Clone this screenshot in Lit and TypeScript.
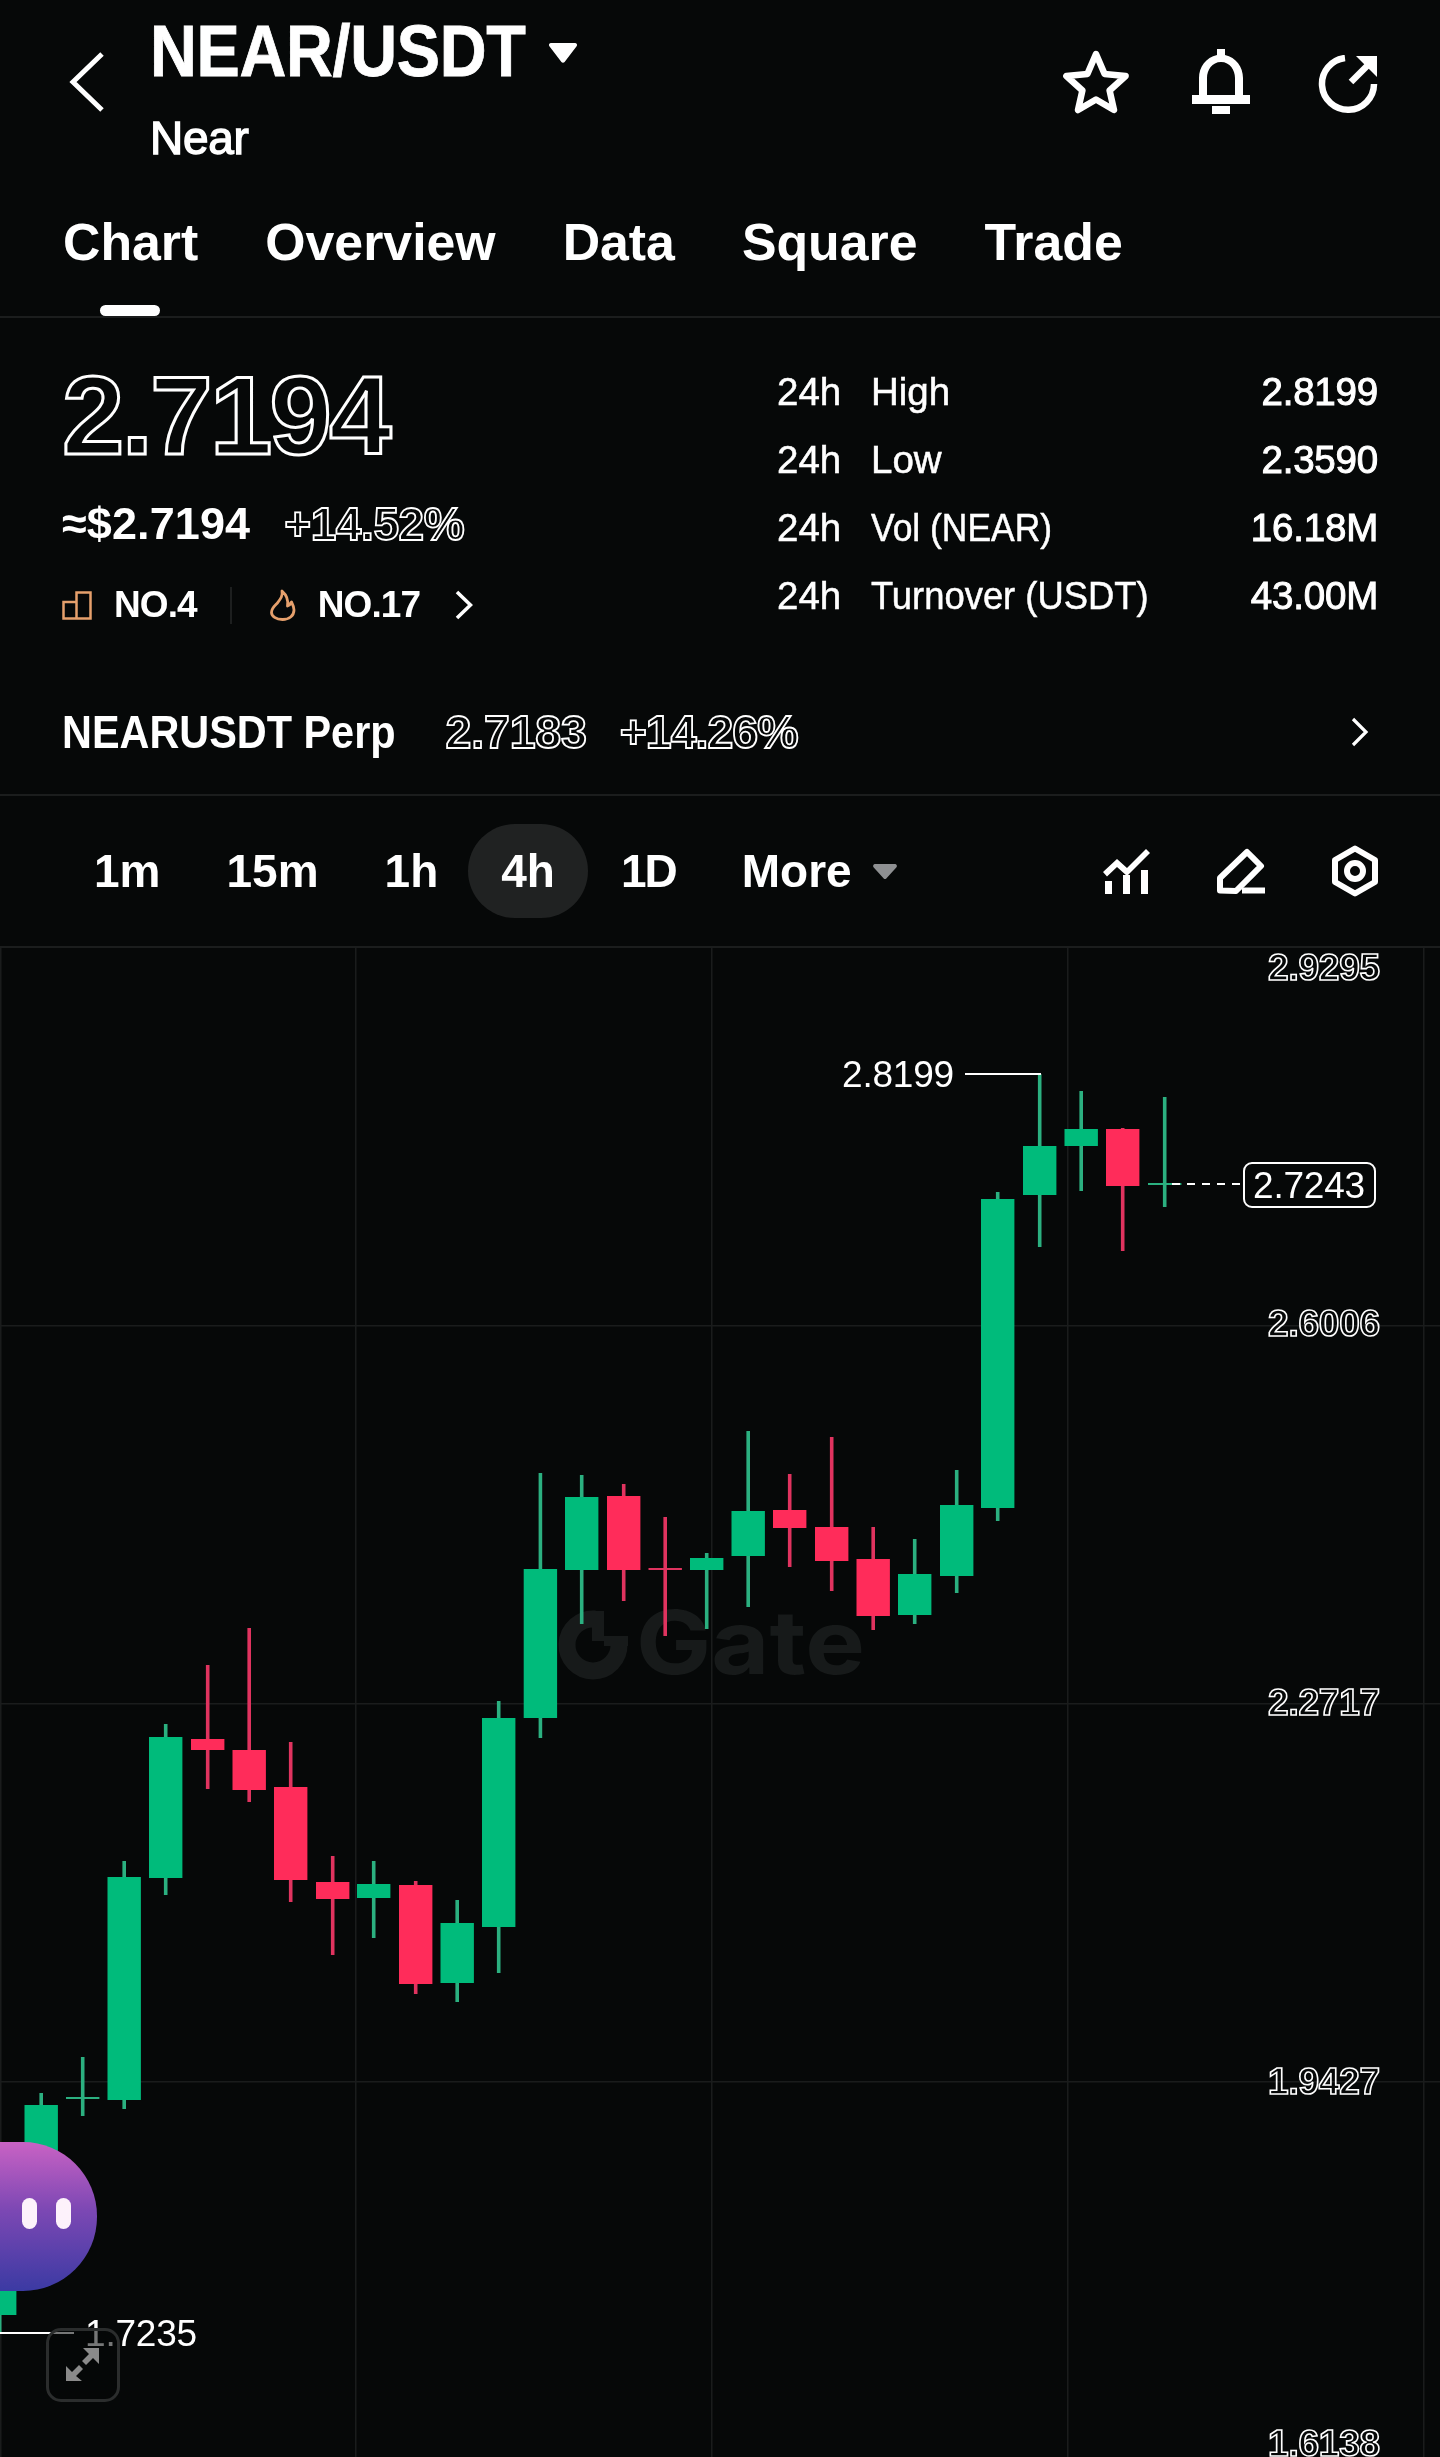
import { LitElement, html, css, svg } from "lit";
import { customElement } from "lit/decorators.js";

type C = [number, number, number, number, number, "g" | "r"]; // x, wickTop, wickBottom, bodyTop, bodyBottom, colour

const candles: C[] = [
  [-17, 2200, 2333, 2200, 2315, "g"],
  [24.5, 2093, 2200, 2105, 2200, "g"],
  [66, 2057, 2116, 2097, 2099, "g"],
  [107.5, 1861, 2109, 1877, 2100, "g"],
  [149, 1724, 1895, 1737, 1878, "g"],
  [191, 1665, 1789, 1739, 1750, "r"],
  [232.5, 1628, 1802, 1750, 1790, "r"],
  [274, 1742, 1902, 1787, 1880, "r"],
  [316, 1856, 1955, 1882, 1899, "r"],
  [357, 1861, 1938, 1884, 1898, "g"],
  [399, 1881, 1994, 1885, 1984, "r"],
  [440.5, 1900, 2002, 1923, 1983, "g"],
  [482, 1701, 1973, 1718, 1927, "g"],
  [523.7, 1473, 1738, 1569, 1718, "g"],
  [565, 1475, 1624, 1497, 1570, "g"],
  [607, 1484, 1601, 1496, 1570, "r"],
  [648.5, 1517, 1636, 1568, 1570, "r"],
  [690, 1553, 1629, 1558, 1570, "g"],
  [731.5, 1431, 1607, 1511, 1556, "g"],
  [773, 1474, 1567, 1510, 1528, "r"],
  [815, 1437, 1591, 1527, 1561, "r"],
  [856.5, 1527, 1630, 1559, 1616, "r"],
  [898, 1539, 1624, 1574, 1615, "g"],
  [940, 1470, 1593, 1505, 1576, "g"],
  [981, 1192, 1521, 1199, 1508, "g"],
  [1023, 1074, 1247, 1146, 1195, "g"],
  [1064.5, 1091, 1191, 1129, 1146, "g"],
  [1106, 1128, 1251, 1129, 1186, "r"],
  [1148, 1097, 1207, 1183, 1185, "g"],
];

const CHART_TOP = 948;

@customElement("app-root")
export class AppRoot extends LitElement {
  static styles = css`
    :host {
      display: block;
      width: 1440px;
      height: 2457px;
      overflow: hidden;
      background: #060808;
      color: #fff;
      font-family: "Liberation Sans", Arial, sans-serif;
    }
    .page { will-change: transform; }
    svg { display: block; }
    .header {
      height: 123px;
      display: flex;
      align-items: flex-start;
      padding: 0 62px 0 68px;
    }
    .back { margin-top: 51px; width: 36px; height: 62px; flex: none; }
    .titles { margin-left: 46px; flex: 1; }
    .title-row { display: flex; align-items: flex-start; height: 92px; }
    .title {
      font-size: 72px;
      line-height: 52px;
      margin-top: 25px;
      margin-right: -36px;
      font-weight: 700;
      letter-spacing: -0.3px;
      -webkit-text-stroke: 0.8px #fff;
      transform: scaleX(0.9);
      transform-origin: left center;
    }
    .caret { margin: 43px 0 0 18px; }
    .sub {
      font-size: 46px;
      line-height: 46px;
      margin-top: 23px;
      letter-spacing: -0.3px;
      -webkit-text-stroke: 1.4px #fff;
    }
    .head-icons { display: flex; margin-top: 48px; align-items: flex-start; margin-left: -2px; }
    .head-icons .bell { margin-left: 63px; }
    .head-icons .share { margin-left: 68px; margin-top: 7px; }
    .tabs {
      height: 195px;
      padding-left: 63px;
      box-sizing: border-box;
      border-bottom: 2px solid #1b1d1d;
    }
    .tabs-inner { display: flex; gap: 67px; height: 193px; }
    .tab {
      font-size: 51.8px;
      font-weight: 700;
      line-height: 50px;
      margin-top: 94px;
      position: relative;
      height: 99px;
      white-space: nowrap;
    }
    .tab.active::after {
      content: "";
      position: absolute;
      left: 37px;
      bottom: 0;
      width: 60px;
      height: 11px;
      border-radius: 6px;
      background: #fff;
    }
    .stats {
      height: 478px;
      border-bottom: 2px solid #1b1d1d;
      box-sizing: border-box;
      padding: 0 62px;
      display: flex;
      flex-direction: column;
    }
    .stats-main { display: flex; justify-content: space-between; height: 359px; }
    .left { width: 700px; }
    .outline { color: transparent; white-space: nowrap; font-weight: 700; }
    .price {
      font-size: 112px;
      line-height: 84px;
      letter-spacing: -2.6px;
      margin-top: 56px;
      -webkit-text-stroke: 3px #fff;
    }
    .line2 { display: flex; align-items: center; margin-top: 44px; height: 44px; }
    .usd { font-size: 45px; font-weight: 700; letter-spacing: 0.1px; line-height: 44px; white-space: nowrap; }
    .chg {
      font-size: 46px;
      line-height: 44px;
      margin-left: 34px;
      letter-spacing: -0.4px;
      -webkit-text-stroke: 1.8px #fff;
    }
    .line3 { display: flex; align-items: center; margin-top: 39px; height: 40px; }
    .no { font-size: 37px; line-height: 40px; font-weight: 700; letter-spacing: -0.9px; margin-left: 22px; white-space: nowrap; }
    .sep { width: 2px; height: 37px; background: #1d1f1f; margin: 0 37px 0 33px; }
    .line3 .chev { margin-left: 35px; }
    .right { width: 601px; display: flex; flex-direction: column; padding-top: 57px; }
    .row {
      display: grid;
      grid-template-columns: 94px 1fr auto;
      height: 68px;
      font-size: 38.5px;
      line-height: 34px;
      -webkit-text-stroke: 0.5px #fff;
      white-space: nowrap;
    }
    .row .vol { transform: scaleX(0.92); transform-origin: left center; }
    .row .turn { transform: scaleX(0.945); transform-origin: left center; }
    .row .v { -webkit-text-stroke: 1px #fff; letter-spacing: -0.2px; }
    .perp { display: flex; align-items: center; height: 110px; }
    .perp-name {
      font-size: 46px;
      font-weight: 700;
      white-space: nowrap;
      margin-right: -36px;
      transform: scaleX(0.9);
      transform-origin: left center;
    }
    .perp-price { font-size: 46.5px; letter-spacing: -0.2px; -webkit-text-stroke: 1.8px #fff; margin-left: 49px; }
    .perp-chg { font-size: 46.5px; letter-spacing: -1px; -webkit-text-stroke: 1.8px #fff; margin-left: 33px; }
    .perp .chev { margin-left: auto; margin-right: 9px; }
    .toolbar {
      height: 152px;
      border-bottom: 2px solid #1b1d1d;
      box-sizing: border-box;
      display: flex;
      align-items: center;
      padding: 0 62px 0 61px;
    }
    .periods { display: flex; align-items: center; flex: 1; }
    .period {
      font-size: 46px;
      font-weight: 700;
      line-height: 94px;
      height: 94px;
      padding: 0 33px;
      border-radius: 47px;
      white-space: nowrap;
    }
    .period.on { background: #202222; margin-left: -3px; }
    .period.day { letter-spacing: -2px; }
    .more-caret { margin-left: -12px; }
    .tools { display: flex; align-items: center; gap: 67px; }
    .chart { position: relative; height: 1509px; }
    .chart > svg { position: absolute; left: 0; top: 0; overflow: visible; }
    .axis {
      font-size: 37px;
      font-weight: 700;
      fill: transparent;
      stroke: #fff;
      stroke-width: 1.6px;
      text-anchor: end;
      letter-spacing: -0.2px;
    }
    .note { font-size: 37px; fill: #fff; letter-spacing: -0.2px; }
    .mark {
      font-size: 88px;
      font-weight: 700;
      fill: #171a1a;
      font-family: "Inter", "Liberation Sans", sans-serif;
    }
    .bot {
      position: absolute;
      left: 0;
      top: 1194px;
      width: 97px;
      height: 149px;
      border-radius: 0 74px 74px 0;
      background: linear-gradient(180deg, #c962c4 0%, #7d48b4 45%, #3b3aa3 100%);
      display: flex;
      gap: 19px;
      padding: 56px 0 0 22px;
      box-sizing: border-box;
    }
    .eye { width: 15px; height: 31px; border-radius: 8px; background: #fdf2fb; }
    .expand {
      position: absolute;
      left: 46px;
      top: 1380px;
      width: 74px;
      height: 74px;
      box-sizing: border-box;
      border: 3px solid #2b2d2d;
      border-radius: 15px;
      background: rgba(6, 8, 8, 0.55);
      display: flex;
      align-items: center;
      justify-content: center;
    }
  `;

  private candle(c: C) {
    const [x, wt, wb, bt, bb, col] = c;
    const body = col === "g" ? "#00bb7b" : "#ff2c5a";
    const wick = col === "g" ? "#2bb080" : "#e0335f";
    const y = (v: number) => v - CHART_TOP;
    return svg`
      <rect x=${x + 14.9} y=${y(wt)} width="3.6" height=${wb - wt} fill=${wick}></rect>
      <rect x=${x} y=${y(bt)} width="33.4" height=${bb - bt} fill=${bb - bt < 4 ? wick : body}></rect>`;
  }

  private chart() {
    const y = (v: number) => v - CHART_TOP;
    return html`<svg width="1440" height="1509" viewBox="0 0 1440 1509">
      ${[1, 356, 712, 1068, 1424].map((x) => svg`<rect x=${x - 1} y="0" width="1.5" height="1509" fill="#1a1c1c"></rect>`)}
      ${[1325, 1703, 2081].map((v) => svg`<rect x="0" y=${y(v)} width="1440" height="1.5" fill="#1a1c1c"></rect>`)}
      <path d="M595 ${y(1619)} A26 26 0 1 0 619 ${y(1644)}" fill="none" stroke="#171a1a" stroke-width="17"></path>
      <rect x="592" y=${y(1611)} width="12" height="30" fill="#171a1a"></rect>
      <rect x="604" y=${y(1636)} width="24" height="10" fill="#171a1a"></rect>
      <text class="mark" x="636" y=${y(1674)} textLength="229" lengthAdjust="spacingAndGlyphs">Gate</text>
      ${candles.map((c) => this.candle(c))}
      <text class="axis" x="1380" y=${y(980)}>2.9295</text>
      <text class="axis" x="1380" y=${y(1336)}>2.6006</text>
      <text class="axis" x="1380" y=${y(1715)}>2.2717</text>
      <text class="axis" x="1380" y=${y(2094)}>1.9427</text>
      <text class="axis" x="1380" y=${y(2456)}>1.6138</text>
      <text class="note" x="842" y=${y(1087)}>2.8199</text>
      <rect x="965" y=${y(1073)} width="76" height="2" fill="#fff"></rect>
      <rect x="0" y=${y(2332)} width="74" height="2" fill="#fff"></rect>
      <text class="note" x="85" y=${y(2346)}>1.7235</text>
      <path d="M1172 ${y(1184)} H1243" stroke="#fff" stroke-width="2" stroke-dasharray="8 7" fill="none"></path>
      <rect x="1244" y=${y(1163)} width="131" height="44" rx="8" fill="#060808" stroke="#fff" stroke-width="2"></rect>
      <text class="note" x="1253" y=${y(1198)}>2.7243</text>
    </svg>
    <div class="bot"><span class="eye"></span><span class="eye"></span></div>
    <div class="expand">
      <svg width="36" height="36" viewBox="0 0 36 36" fill="#8a8a8a">
        <path d="M34 1v16l-6-6-7 7-4-4 7-7-6-6z"></path>
        <path d="M1 34V19l6 6 7-7 4 4-7 7 6 5z"></path>
      </svg>
    </div>`;
  }

  render() {
    return html`
      <div class="page">
      <div class="header">
        <svg class="back" viewBox="0 0 36 62" fill="none" stroke="#fff" stroke-width="5"><path d="M34 3 5 31l29 28"></path></svg>
        <div class="titles">
          <div class="title-row">
            <span class="title">NEAR/USDT</span>
            <svg class="caret" width="28" height="20" viewBox="0 0 28 20" fill="#fff"><path d="M2 0h24a2 2 0 0 1 1.6 3.2L15.6 19a2 2 0 0 1-3.2 0L.4 3.2A2 2 0 0 1 2 0z"></path></svg>
          </div>
          <div class="sub">Near</div>
        </div>
        <div class="head-icons">
          <svg width="66" height="66" viewBox="0 0 66 66" fill="none" stroke="#fff" stroke-width="6.5" stroke-linejoin="round"><path d="M33 6l8.6 20 21 2-16 14.500L51 62 33 51.500 15 62l4.400-19.500-16-14.500 21-2z"></path></svg>
          <svg class="bell" width="58" height="66" viewBox="0 0 58 66" fill="#fff"><path fill-rule="evenodd" d="M25 1h8v6c11 2.500 18 12 18 23v17h7v9H0v-9h7V30C7 19 14 9.500 25 7zM29 14c-9 0-14 8-14 16v17h28V30c0-8-5-16-14-16z"></path><rect x="20" y="58" width="18" height="8"></rect></svg>
          <svg class="share" width="60" height="60" viewBox="0 0 60 60" fill="none" stroke="#fff" stroke-width="6.500"><path d="M56 29A26 26 0 1 1 27 3"></path><path d="M33 27 53 7"></path><path d="M38 1h21v21z" fill="#fff" stroke="none"></path></svg>
        </div>
      </div>
      <div class="tabs">
        <div class="tabs-inner">
          <span class="tab active">Chart</span>
          <span class="tab">Overview</span>
          <span class="tab">Data</span>
          <span class="tab">Square</span>
          <span class="tab">Trade</span>
        </div>
      </div>
      <div class="stats">
        <div class="stats-main">
          <div class="left">
            <div class="price outline">2.7194</div>
            <div class="line2"><span class="usd">≈$2.7194</span><span class="chg outline">+14.52%</span></div>
            <div class="line3">
              <svg width="30" height="29" viewBox="0 0 30 29" fill="none" stroke="#e6a06c" stroke-width="2.500"><path d="M1.500 27.500V11h13v16.500zM14.500 27.500V1.500h14v26z"></path></svg>
              <span class="no">NO.4</span>
              <span class="sep"></span>
              <svg width="27" height="32" viewBox="0 0 27 32" fill="none" stroke="#e6a06c" stroke-width="2.800" stroke-linejoin="round"><path d="M13 2c1 5-1.500 8-5 12.500-2 2-5.500 5-5.500 9C2.500 27 7 30.500 13.500 30.500S25 27 25 21c0-3-1.500-6-2.500-8-1 2-2.500 3.500-4 4 1-6-1.500-11.500-5.500-15z"></path></svg>
              <span class="no">NO.17</span>
              <svg class="chev" width="18" height="30" viewBox="0 0 18 30" fill="none" stroke="#fff" stroke-width="3.600"><path d="M2 2l13.500 13L2 28"></path></svg>
            </div>
          </div>
          <div class="right">
            <div class="row"><span>24h</span><span>High</span><span class="v">2.8199</span></div>
            <div class="row"><span>24h</span><span>Low</span><span class="v">2.3590</span></div>
            <div class="row"><span>24h</span><span class="vol">Vol (NEAR)</span><span class="v">16.18M</span></div>
            <div class="row"><span>24h</span><span class="turn">Turnover (USDT)</span><span class="v">43.00M</span></div>
          </div>
        </div>
        <div class="perp">
          <span class="perp-name">NEARUSDT Perp</span>
          <span class="perp-price outline">2.7183</span>
          <span class="perp-chg outline">+14.26%</span>
          <svg class="chev" width="18" height="30" viewBox="0 0 18 30" fill="none" stroke="#fff" stroke-width="3.200"><path d="M2 2l13 13L2 28"></path></svg>
        </div>
      </div>
      <div class="toolbar">
        <div class="periods">
          <span class="period">1m</span>
          <span class="period">15m</span>
          <span class="period">1h</span>
          <span class="period on">4h</span>
          <span class="period day">1D</span>
          <span class="period">More</span>
          <svg class="more-caret" width="24" height="15" viewBox="0 0 24 15" fill="#8e9092"><path d="M2 0h20a2 2 0 0 1 1.500 3.200L13.500 14.300a2 2 0 0 1-3 0L.5 3.200A2 2 0 0 1 2 0z"></path></svg>
        </div>
        <div class="tools">
          <svg width="48" height="46" viewBox="0 0 48 46" fill="#fff"><rect x="3" y="33" width="7" height="13"></rect><rect x="21" y="27" width="7" height="19"></rect><rect x="39" y="22" width="7" height="24"></rect><path d="M1 24l14-13 10 9L44 1l4 4-23 23-10-9L5 28.500z"></path></svg>
          <svg width="48" height="46" viewBox="0 0 48 46" fill="none" stroke="#fff" stroke-width="6" stroke-linejoin="round"><path d="M3 42.500V30L30 4l14 14-25 25z"></path><path d="M25 42.500h23"></path></svg>
          <svg width="46" height="52" viewBox="0 0 46 52" fill="none" stroke="#fff" stroke-width="6" stroke-linejoin="round"><path d="M23 3.500l20 11.500v22L23 48.500 3 37V15z"></path><circle cx="23" cy="26" r="8"></circle></svg>
        </div>
      </div>
      <div class="chart">${this.chart()}</div>
      </div>
    `;
  }
}
